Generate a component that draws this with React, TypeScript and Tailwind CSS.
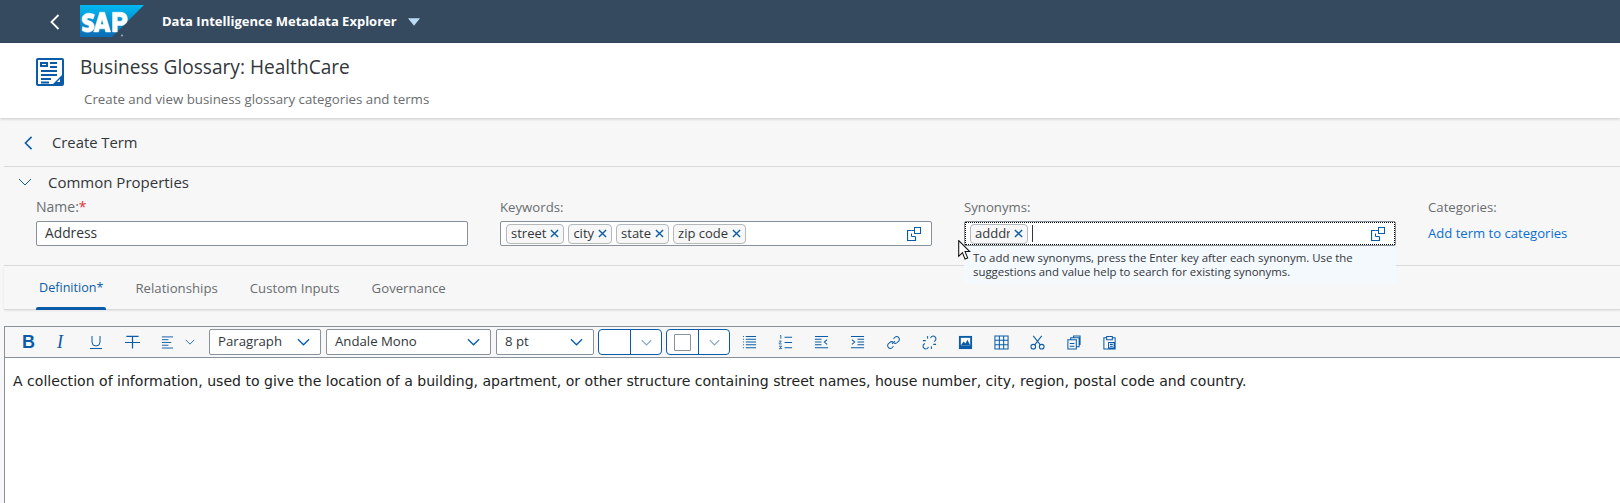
import React from "react";

const F = "font-['Open_Sans','Noto_Sans',sans-serif]";
const BLUE = "#0a5ca8";

function Chevron({ className = "", color = BLUE, w = 1.4 }: { className?: string; color?: string; w?: number }) {
  return (
    <svg viewBox="0 0 14 8" className={className} fill="none" stroke={color} strokeWidth={w}>
      <path d="M1 1l6 6 6-6" />
    </svg>
  );
}

function Back({ color, className }: { color: string; className: string }) {
  return (
    <svg viewBox="0 0 10 16" className={className} fill="none" stroke={color} strokeWidth="1.8">
      <path d="M8.5 1L1.5 8l7 7" />
    </svg>
  );
}

function ValueHelp() {
  return (
    <svg viewBox="0 0 14 14" className="w-[14px] h-[14px] shrink-0" fill="none" stroke={BLUE} strokeWidth="1">
      <path d="M4.5 3.5H.5v10h8V9.5" strokeWidth="1.2" />
      <rect x="7.5" y=".5" width="6" height="6" strokeWidth="1" />
      <path d="M4.5 3.5h3M8.5 9.5h-4v-3" strokeWidth="1" />
    </svg>
  );
}

function Token({ text }: { text: string }) {
  return (
    <span className="h-5 flex items-center gap-[4px] px-[4px] border border-[#b4b9be] rounded-[4px] bg-[#f7f7f7] text-[#32363a] text-[13px] whitespace-nowrap">
      {text}
      <svg viewBox="0 0 10 10" className="w-[9px] h-[9px]" stroke={BLUE} strokeWidth="1.5">
        <path d="M1 1l8 8M9 1l-8 8" />
      </svg>
    </span>
  );
}

function Select({ text, w }: { text: string; w: string }) {
  return (
    <div className={`${w} h-[26px] flex items-center justify-between pl-[8px] pr-[10px] border border-[#89919a] rounded-[2px] bg-white text-[#32363a] text-[13.2px]`}>
      <span>{text}</span>
      <Chevron className="w-[13px] h-[8px]" />
    </div>
  );
}

function Split({ swatch }: { swatch?: boolean }) {
  return (
    <div className="w-[64px] h-[26px] flex border border-[#0a5ca8] rounded-[4px] bg-white">
      <div className="w-[32px] flex items-center justify-center border-r border-[#0a5ca8]">
        {swatch && <div className="w-[17px] h-[17px] border border-[#89919a] rounded-[1px]" />}
      </div>
      <div className="flex-1 flex items-center justify-center">
        <Chevron className="w-[11px] h-[7px]" color="#7da4c9" />
      </div>
    </div>
  );
}

const ICONS: Record<string, React.ReactNode> = {
  list: <path d="M1 1.5h1M4 1.5h11M1 4.5h1M4 4.5h11M1 7.5h1M4 7.5h11M1 10.5h1M4 10.5h11M1 13.5h1M4 13.5h11" />,
  num: <><path d="M7 2.5h8M7 8h8M7 13.5h8" /><path d="M2 1l1-.5V4M1 6.5h2.5L1 9.5h3M1 12h3l-1.5 1 1.5 1.5H1" strokeWidth=".9" /></>,
  out: <path d="M1 1.5h14M1 4.5h7M1 7.5h7M1 10.5h7M1 13.5h14M14 5l-3 2.5 3 2.5" />,
  ind: <path d="M1 1.5h14M8 4.5h7M8 7.5h7M8 10.5h7M1 13.5h14M2 5l3 2.5-3 2.5" />,
  link: <path d="M6.5 9.5l3-3M8 4l2-2a3 3 0 0 1 4 4l-2 2a3 3 0 0 1-3.5.5M8 12l-2 2a3 3 0 0 1-4-4l2-2a3 3 0 0 1 3.5-.5" />,
  unlink: <path d="M9 3l1.5-1.5a3 3 0 0 1 4 4L13 7M7 13l-1.5 1.5a3 3 0 0 1-4-4L3 9M6 1v3M1 6h3M10 15v-3M15 10h-3" />,
  table: <path d="M1 1h14v14H1zM1 5.7h14M1 10.3h14M5.7 1v14M10.3 1v14" />,
  cut: <><circle cx="3.5" cy="12.5" r="2.5" /><circle cx="12.5" cy="12.5" r="2.5" /><path d="M5 10.5L12.5 1M11 10.5L3.5 1" /></>,
  copy: <path d="M2 5h9v10H2zM5 5V3h9v9.5h-3M8 3V1h7v9h-1M4 9h5M4 12h5" />,
  paste: <path d="M5 3H2v12h12V3h-3M5 1.5h6V5H5zM7 8h6v6H7zM8.5 10h3M8.5 12h3" />,
};

function Tool({ name }: { name: string }) {
  return (
    <svg viewBox="0 0 16 16" className="w-[15px] h-[15px]" fill="none" stroke={BLUE} strokeWidth="1.1">
      {ICONS[name]}
    </svg>
  );
}

export default function App() {
  return (
    <div className={`${F} relative w-[1620px] h-[503px] overflow-hidden bg-[#f7f7f7]`}>
      {/* Shell bar */}
      <header className="h-[43px] bg-[#354a5f] flex items-center pl-[50px]">
        <Back color="#ffffff" className="w-[10px] h-[16px]" />
        <svg viewBox="0 0 64 32" className="ml-[20px] w-[64px] h-[32px] mt-[-1px]">
          <defs>
            <linearGradient id="sap" x1="0" y1="0" x2="0" y2="1">
              <stop offset="0" stopColor="#00b8f1" />
              <stop offset="1" stopColor="#0a6cb5" />
            </linearGradient>
          </defs>
          <path d="M0 0h64L32 32H0z" fill="url(#sap)" />
          <g transform="translate(-6.5 -5) scale(1.22 1.36)">
            <path
              d="M7 22.5c1.5.8 3 1.2 4.5 1.2 3.5 0 5.5-1.8 5.5-4.2 0-2.3-1.5-3.3-3.5-4-1.8-.6-2.5-.9-2.5-1.5 0-.5.6-.8 1.6-.8 1.2 0 2.4.4 3.4.9l1.3-3.3c-1.4-.7-2.9-1.1-4.7-1.1-3.3 0-5.6 1.8-5.6 4.5 0 2.3 1.5 3.3 3.4 3.9 1.8.6 2.5.9 2.5 1.5s-.7.9-1.8.9c-1.3 0-2.6-.4-3.6-1zM21.5 9l-5 14.5h4l.7-2.3h4.5l.7 2.3h4.1L25.5 9zM22.2 18l1.2-4.1 1.3 4.1zM32 9v14.5h3.9v-4.7h2.5c3.6 0 5.8-2 5.8-4.9S42 9 38.4 9zM35.9 12.3h2.1c1.4 0 2.2.6 2.2 1.6s-.8 1.7-2.2 1.7h-2.1z"
              fill="#fff"
              stroke="#fff"
              strokeWidth=".4"
            />
          </g>
          <circle cx="42" cy="30.5" r="1" fill="#8fb8d8" />
        </svg>
        <span className="ml-[18px] text-white text-[13px] font-bold">Data Intelligence Metadata Explorer</span>
        <svg viewBox="0 0 11 7" className="ml-[11px] w-[12px] h-[8px]">
          <path d="M0 0h11L5.5 7z" fill="#bcdcf5" />
        </svg>
      </header>

      {/* Object header */}
      <section className="relative z-10 h-[75px] bg-white shadow-[0_1px_3px_rgba(0,0,0,0.2)] flex pl-[36px]">
        <svg viewBox="0 0 28 28" className="w-[28px] h-[28px] mt-[15px]" fill="none" stroke={BLUE}>
          <rect x="1" y="1" width="26" height="26" rx="1" strokeWidth="2" />
          <path d="M5 5h6v3H5z" strokeWidth="2" />
          <path d="M14 5h7M14 9h7M5 13h16M5 17h16M5 21h10M5 24.5h8" strokeWidth="2" />
          <path d="M27 16v11H16z" fill={BLUE} stroke="none" />
          <path d="M21 24l3-3v3z" fill="#fff" stroke="none" />
        </svg>
        <div className="ml-[16px]">
          <h1 className="mt-[10px] text-[#32363a] text-[19.1px] leading-[28px]">Business Glossary: HealthCare</h1>
          <p className="ml-[4px] mt-[9px] text-[#6a6d70] text-[13.3px] leading-[18px]">
            Create and view business glossary categories and terms
          </p>
        </div>
      </section>

      {/* Sub header */}
      <div className="ml-[4px] h-[49px] border-b border-[#d9d9d9] flex items-center pl-[20px] pt-[1px]">
        <Back color={BLUE} className="w-[9px] h-[14px]" />
        <span className="ml-[19px] text-[#32363a] text-[14.8px]">Create Term</span>
      </div>

      {/* Common properties */}
      <section className="ml-[4px] h-[99px] border-b border-[#d9d9d9] relative">
        <div className="flex items-center pl-[14px] h-[30px]">
          <Chevron className="w-[14px] h-[8px]" w={1} />
          <span className="ml-[16px] text-[#32363a] text-[15px]">Common Properties</span>
        </div>
        <div className="flex pl-[32px] mt-[1px]">
          <div className="w-[432px]">
            <label className="block text-[#6a6d70] text-[14px] leading-[18px]">
              Name:<span className="text-[#e0323a]">*</span>
            </label>
            <div className="mt-[5px] h-[25px] flex items-center px-[8px] border border-[#89919a] rounded-[2px] bg-white text-[#32363a] text-[13.8px]">
              Address
            </div>
          </div>
          <div className="w-[432px] ml-[32px]">
            <label className="block text-[#6a6d70] text-[13.2px] leading-[18px]">Keywords:</label>
            <div className="mt-[5px] h-[25px] flex items-center gap-[4px] pl-[5px] pr-[10px] border border-[#89919a] rounded-[2px] bg-white">
              <Token text="street" />
              <Token text="city" />
              <Token text="state" />
              <Token text="zip code" />
              <span className="ml-auto flex"><ValueHelp /></span>
            </div>
          </div>
          <div className="w-[432px] ml-[32px] relative">
            <label className="block text-[#6a6d70] text-[13.2px] leading-[18px]">Synonyms:</label>
            <div className="mt-[5px] h-[25px] flex items-center pl-[5px] pr-[10px] border border-[#89919a] rounded-[2px] bg-white outline-1 outline-dotted outline-black outline-offset-[-2px]">
              <span className="h-5 flex items-center gap-[4px] px-[4px] border border-[#b4b9be] rounded-[4px] bg-[#f7f7f7] text-[#32363a] text-[13px]">
                <span className="w-[35px] overflow-hidden whitespace-nowrap">adddress</span>
                <svg viewBox="0 0 10 10" className="w-[9px] h-[9px]" stroke={BLUE} strokeWidth="1.5">
                  <path d="M1 1l8 8M9 1l-8 8" />
                </svg>
              </span>
              <span className="ml-[4px] w-px h-[17px] bg-[#32363a]" />
              <span className="ml-auto flex"><ValueHelp /></span>
            </div>
            <div className="absolute z-20 left-0 top-[48px] w-[432px] h-[38px] pl-[9px] pt-[5px] bg-[#f4f9fe] text-[#32363a] text-[11.4px] leading-[14px]">
              To add new synonyms, press the Enter key after each synonym. Use the
              <br />
              suggestions and value help to search for existing synonyms.
            </div>
          </div>
          <div className="ml-[32px]">
            <label className="block text-[#6a6d70] text-[13.2px] leading-[18px]">Categories:</label>
            <a className="block mt-[8px] text-[#0a6ed1] text-[13.1px] leading-[18px]">Add term to categories</a>
          </div>
        </div>
      </section>

      {/* Tabs */}
      <nav className="ml-[4px] h-[44px] border-b border-[#d9d9d9] shadow-[0_1px_2px_rgba(0,0,0,0.08)] flex pl-[32px] gap-[32px] text-[13.2px]">
        <span className="relative px-[3px] pt-[12px] text-[#0a5ca8] text-[12.6px] leading-[20px]">
          Definition*
          <span className="absolute left-0 right-0 bottom-[-1px] h-[3px] rounded-t-[2px] bg-[#0a5ca8]" />
        </span>
        <span className="-ml-[3px] pt-[12px] text-[#6a6d70] leading-[20px]">Relationships</span>
        <span className="pt-[12px] text-[#6a6d70] leading-[20px]">Custom Inputs</span>
        <span className="pt-[12px] text-[#6a6d70] leading-[20px]">Governance</span>
      </nav>

      {/* Editor */}
      <div className="ml-[4px] mt-[16px] border-t border-l border-[#89919a] bg-white h-[201px]">
        <div className="h-[31px] bg-[#f7f7f7] border-b border-[#89919a] flex items-center pl-[17px]">
          <span className="w-[14px] text-[#0a5ca8] text-[18px] font-bold leading-none font-['Liberation_Sans',sans-serif]">B</span>
          <span className="ml-[21px] w-[12px] text-[#0a5ca8] text-[18px] italic leading-none font-['Liberation_Serif',serif]">I</span>
          <svg viewBox="0 0 12 14" className="ml-[21px] w-[12px] h-[14px]" fill="none" stroke={BLUE} strokeWidth="1">
            <path d="M2 1v6a4 4 0 0 0 8 0V1M0 13.5h12" />
          </svg>
          <svg viewBox="0 0 16 16" className="ml-[23px] w-[15px] h-[15px]" fill="none" stroke={BLUE} strokeWidth="1.3">
            <path d="M1.5 1.5h13M8 1.5v13M0 8h16" />
          </svg>
          <svg viewBox="0 0 14 14" className="ml-[21px] w-[13px] h-[14px]" fill="none" stroke={BLUE} strokeWidth="1">
            <path d="M1 1.5h12M1 4.5h7M1 7.5h10M1 10.5h7M1 13.5h12" />
          </svg>
          <Chevron className="ml-[11px] w-[10px] h-[6px]" w={1.2} />
          <div className="ml-[14px] flex gap-[5px]">
            <Select text="Paragraph" w="w-[112px]" />
            <Select text="Andale Mono" w="w-[165px]" />
            <Select text="8 pt" w="w-[98px]" />
          </div>
          <div className="ml-[4px] flex gap-[4px]">
            <Split />
            <Split swatch />
          </div>
          <div className="ml-[12px] flex items-center gap-[21px]">
            <Tool name="list" />
            <Tool name="num" />
            <Tool name="out" />
            <Tool name="ind" />
            <Tool name="link" />
            <Tool name="unlink" />
            <svg viewBox="0 0 16 16" className="w-[15px] h-[15px]">
              <path d="M1 1h14v14H1z" fill="#0a5ca8" />
              <path d="M3 3h10v8H3z" fill="#fff" />
              <path d="M3 11l3-4 2 2 2-4 3 6z" fill="#0a5ca8" />
            </svg>
            <Tool name="table" />
            <Tool name="cut" />
            <Tool name="copy" />
            <Tool name="paste" />
          </div>
        </div>
        <p className="pl-[8px] pt-[13px] text-[#222] text-[14.07px] leading-[20px] font-['DejaVu_Sans',sans-serif]">
          A collection of information, used to give the location of a building, apartment, or other structure containing street names, house number, city, region, postal code and country.
        </p>
      </div>

      {/* Mouse pointer */}
      <svg viewBox="0 0 12 19" className="absolute z-30 left-[958px] top-[240px] w-[13px] h-[20px]">
        <path d="M.5.5v15l3.5-3.5 2.5 6 2.5-1-2.5-6H11z" fill="#fff" stroke="#111" strokeWidth="1" />
      </svg>
    </div>
  );
}
